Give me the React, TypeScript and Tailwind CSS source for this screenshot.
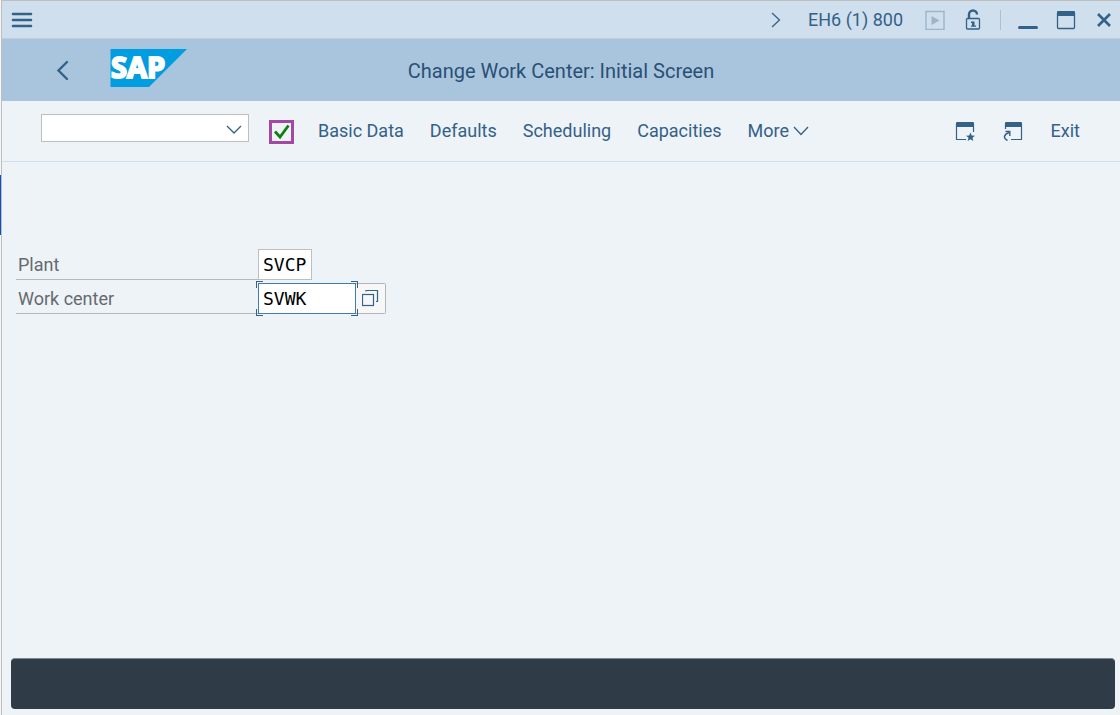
import { useState } from 'react';

const actions = ['Basic Data', 'Defaults', 'Scheduling', 'Capacities'];

const SapLogo = () => (
  <svg className="overflow-visible" width="77" height="38" viewBox="0 0 77 38" role="img" aria-label="SAP">
    <path d="M0.5 0H77L39 38H0.5Z" fill="#009de0" />
    <text
      x="1"
      y="29"
      fontFamily="'Open Sans', 'Noto Sans', sans-serif"
      fontSize="29"
      fontWeight="700"
      fill="#fff"
      stroke="#fff"
      strokeWidth="2"
    >
      SAP
    </text>
  </svg>
);

const TitleBar = () => (
  <div className="flex h-[39px] items-center border-t border-b border-t-[#bfbfbf] border-b-[#c3cdd6] bg-[#cfdfed] pr-2 pl-[9px] text-[#346187]">
    <button type="button" aria-label="Menu">
      <svg width="22" height="20" viewBox="0 0 22 20" stroke="currentColor" strokeWidth="2.6" strokeLinecap="round">
        <path d="M2 4H20M2 10H20M2 16H20" />
      </svg>
    </button>

    <div className="ml-auto flex items-center">
      <button type="button" aria-label="Show more" className="mr-[27px]">
        <svg width="10" height="16" viewBox="0 0 10 16" fill="none" stroke="currentColor" strokeWidth="1.3">
          <path d="M1 1L8.5 8L1 15" />
        </svg>
      </button>
      <span className="text-lg leading-6">EH6 (1) 800</span>
      <button type="button" aria-label="Run script" className="ml-[22px] text-[#9bb5ca]">
        <svg width="20" height="20" viewBox="0 0 20 20">
          <rect x="1" y="1.5" width="18" height="18" fill="none" stroke="currentColor" strokeWidth="1.4" />
          <path d="M6.5 6V15L14.5 10.5Z" fill="currentColor" />
        </svg>
      </button>
      <button type="button" aria-label="Unlock" className="ml-5">
        <svg width="16" height="21" viewBox="0 0 16 21" fill="none" stroke="currentColor">
          <path d="M4 10V5.5A4 4 0 0 1 12 5.5" strokeWidth="2.4" />
          <rect x="1.5" y="9.5" width="13" height="10.5" rx="1" strokeWidth="1.3" />
          <path d="M6 12.5h3.5v4H11v1.3H6v-1.3h1v-2.5H6z" fill="currentColor" stroke="none" />
        </svg>
      </button>
      <div className="ml-[19px] h-5 w-px bg-[#b0bfcc]" />
      <button type="button" aria-label="Minimize" className="ml-[17px]">
        <svg width="20" height="20" viewBox="0 0 20 20">
          <path d="M1.5 17.5H18.5" stroke="currentColor" strokeWidth="3" strokeLinecap="round" />
        </svg>
      </button>
      <button type="button" aria-label="Maximize" className="ml-[18px]">
        <svg width="20" height="20" viewBox="0 0 20 20">
          <rect x="1.5" y="2" width="17" height="16.5" rx="1" fill="none" stroke="currentColor" strokeWidth="1.3" />
          <rect x="1" y="1" width="18" height="5" rx="1" fill="currentColor" />
        </svg>
      </button>
      <button type="button" aria-label="Close" className="ml-5">
        <svg width="16" height="16" viewBox="0 0 16 16" stroke="currentColor" strokeWidth="2.6">
          <path d="M2 2L14 14M14 2L2 14" />
        </svg>
      </button>
    </div>
  </div>
);

const Header = () => (
  <header className="grid h-[62px] grid-cols-[1fr_auto_1fr] items-center bg-[#a9c5de]">
    <div className="flex items-center pl-[54px]">
      <button type="button" aria-label="Back" className="text-[#346187]">
        <svg width="14" height="22" viewBox="0 0 14 22" fill="none" stroke="currentColor" strokeWidth="2.4" strokeLinecap="round">
          <path d="M11 3L2.5 11.5L11 20" />
        </svg>
      </button>
      <div className="-mt-1 ml-10">
        <SapLogo />
      </div>
    </div>
    <h1 className="pt-0.5 text-xl text-[#2a5075]">Change Work Center: Initial Screen</h1>
  </header>
);

const Toolbar = () => (
  <nav className="flex h-[61px] items-center border-b border-[#cfdfec] pr-10 pl-[39px] text-lg leading-6 text-[#346187]">
    <div className="mb-1.5 grid h-7 w-52 items-center border border-[#bfbfbf] bg-white">
      <select aria-label="Command" className="col-start-1 row-start-1 h-full w-full appearance-none px-1 text-black outline-none">
        <option value=""></option>
      </select>
      <svg className="pointer-events-none col-start-1 row-start-1 mt-1 mr-1.5 justify-self-end" width="16" height="10" viewBox="0 0 16 10" fill="none" stroke="currentColor" strokeWidth="1.3">
        <path d="M1 1L8 8L15 1" />
      </svg>
    </div>

    <button type="button" aria-label="Enter" className="mt-0.5 ml-5 flex h-6 w-[25px] items-center justify-center border-3 border-[#a349a4]">
      <svg width="17" height="17" viewBox="0 0 17 17" fill="none" stroke="#107e10" strokeWidth="2.8">
        <path d="M2 7.5L7 13L15.5 1.5" />
      </svg>
    </button>

    <div className="ml-6 flex items-center gap-[26px]">
      {actions.map((action) => (
        <button key={action} type="button">{action}</button>
      ))}
      <button type="button" className="flex items-center gap-1">
        More
        <svg width="16" height="10" viewBox="0 0 16 10" fill="none" stroke="currentColor" strokeWidth="1.3">
          <path d="M1 1L8 8.5L15 1" />
        </svg>
      </button>
    </div>

    <div className="ml-auto flex items-center">
      <button type="button" aria-label="Create new session">
        <svg width="20" height="20" viewBox="0 0 20 20">
          <path d="M1.5 3V18.5H11M18.5 3V11" fill="none" stroke="currentColor" strokeWidth="1.2" />
          <rect x="1" y="1" width="18" height="5" rx="1" fill="currentColor" />
          <path d="M15.5 11.5L16.7 14.5L20 14.7L17.5 16.8L18.3 20L15.5 18.2L12.7 20L13.5 16.8L11 14.7L14.3 14.5Z" fill="currentColor" />
        </svg>
      </button>
      <button type="button" aria-label="Create shortcut" className="ml-7">
        <svg width="20" height="20" viewBox="0 0 20 20">
          <path d="M2.5 3V8M18.5 3V18.5H8" fill="none" stroke="currentColor" strokeWidth="1.2" />
          <rect x="2" y="1" width="17" height="5" rx="1" fill="currentColor" />
          <path d="M4.5 19.5C0 17.5 0.5 13.5 6 11.5" fill="none" stroke="currentColor" strokeWidth="1.5" />
          <path d="M2.5 10.5H6.8V15" fill="none" stroke="currentColor" strokeWidth="1.4" />
        </svg>
      </button>
      <button type="button" className="ml-7">Exit</button>
    </div>
  </nav>
);

// Corner brackets drawn around the focused field
const FocusCorners = () => (
  <div className="pointer-events-none absolute -inset-[2px]">
    <span className="absolute top-0 left-0 size-[7px] border-t border-l border-[#346187]" />
    <span className="absolute top-0 right-0 size-[7px] border-t border-r border-[#346187]" />
    <span className="absolute bottom-0 left-0 size-[7px] border-b border-l border-[#346187]" />
    <span className="absolute right-0 bottom-0 size-[7px] border-r border-b border-[#346187]" />
  </div>
);

export default function App() {
  const [plant, setPlant] = useState('SVCP');
  const [workCenter, setWorkCenter] = useState('SVWK');

  const label = 'w-[242px] border-b border-[#b5b9bc] pl-0.5 text-lg leading-[31px] text-[#666a6e]';
  const field = "border px-1 bg-white font-['DejaVu_Sans_Mono',monospace] text-lg leading-6 text-black outline-none";

  return (
    <div className="flex min-h-screen bg-[#eef3f8] font-[Roboto,sans-serif]">
      {/* sliver of the window behind */}
      <div className="w-px bg-[#f5f5f5] pt-[175px]">
        <div className="h-[60px] bg-[#0a50c8]" />
      </div>

      <div className="flex min-w-0 flex-1 flex-col border-l border-[#bfbfbf]">
        <TitleBar />
        <Header />
        <Toolbar />

        <main className="flex flex-1 flex-col gap-[3px] pt-[87px] pl-3.5">
          <div className="flex h-[31px] items-stretch">
            <label htmlFor="plant" className={label}>Plant</label>
            <input
              id="plant"
              value={plant}
              onChange={(e) => setPlant(e.target.value)}
              className={`${field} w-[54px] border-[#bfbfbf]`}
            />
          </div>
          <div className="flex h-[31px] items-stretch">
            <label htmlFor="work-center" className={label}>Work center</label>
            <div className="relative flex">
              <input
                id="work-center"
                value={workCenter}
                onChange={(e) => setWorkCenter(e.target.value)}
                className={`${field} w-[98px] border-[#427cac]`}
              />
              <FocusCorners />
            </div>
            <button type="button" aria-label="Open value help" className="flex w-[30px] items-center justify-center rounded-r-xs border border-l-0 border-[#b5b5b5] bg-[#f7f7f7] text-[#346187]">
              <svg width="18" height="18" viewBox="0 0 18 18" fill="none" stroke="currentColor" strokeWidth="1.2">
                <rect x="0.5" y="4.5" width="11" height="11" />
                <path d="M4 1.5V0.5H15.5V11.5H14" />
              </svg>
            </button>
          </div>
        </main>

        <footer className="mr-[5px] mb-1.5 ml-[9px] h-[51px] rounded-sm border-t border-[#7d8891] bg-[#2f3b47]" />
      </div>
    </div>
  );
}
